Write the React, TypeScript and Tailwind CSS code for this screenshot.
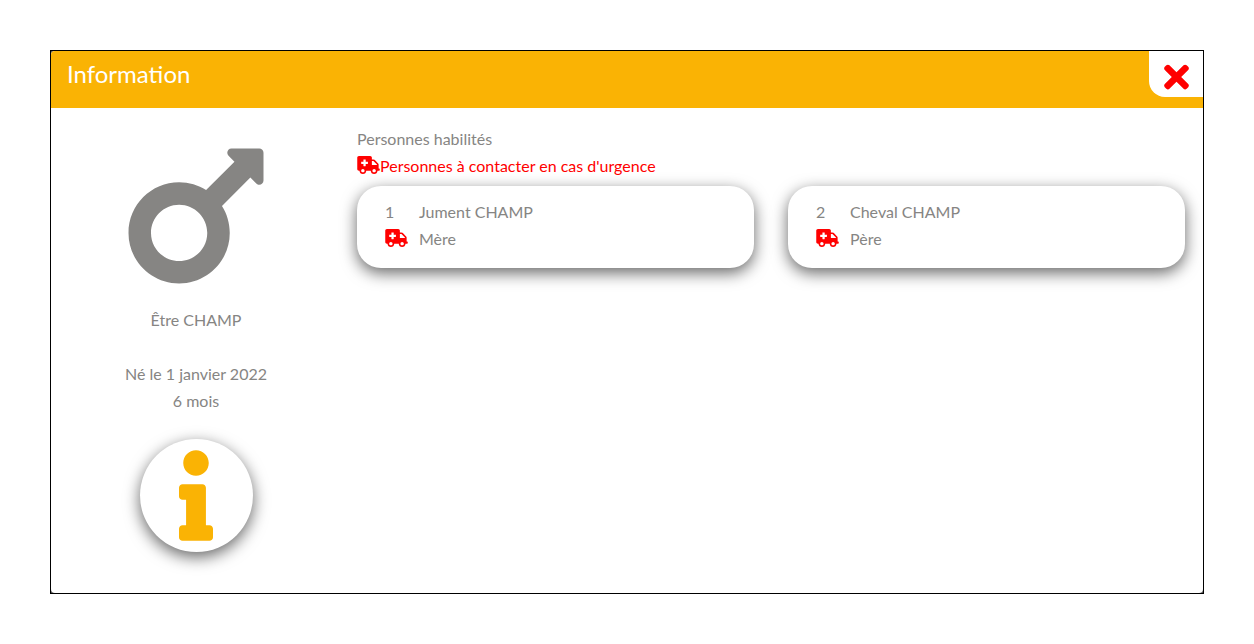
import { FaAmbulance, FaInfo, FaMars, FaTimes } from 'react-icons/fa';

type Contact = {
    order: number;
    name: string;
    relation: string;
};

const contacts: Contact[] = [
    { order: 1, name: 'Jument CHAMP', relation: 'Mère' },
    { order: 2, name: 'Cheval CHAMP', relation: 'Père' },
];

function ContactCard({ contact }: { contact: Contact }) {
    return (
        <li className="flex rounded-3xl bg-white px-7 pt-3 pb-4 shadow-[0_5px_16px_rgba(0,0,0,0.6)]">
            <div className="w-[34px] shrink-0">
                <p>{contact.order}</p>
                <FaAmbulance className="mt-1 h-[18px] w-[23px] text-[#ff0000]" />
            </div>
            <div>
                <p>{contact.name}</p>
                <p>{contact.relation}</p>
            </div>
        </li>
    );
}

export default function App() {
    return (
        <div className="flex min-h-screen bg-white p-[50px] font-['Lato',sans-serif] text-base leading-[27px] text-[#868583]">
            <div role="dialog" aria-labelledby="dialog-title" className="flex flex-1 border border-black bg-[#555]">
                <div className="flex-1 overflow-hidden rounded-b rounded-tl-sm bg-white">
                    <header className="flex h-[57px] items-start justify-between bg-[#fab304]">
                        <h1 id="dialog-title" className="pt-[7px] pl-4 text-2xl leading-8 text-white">
                            Information
                        </h1>
                        <button
                            type="button"
                            aria-label="Fermer"
                            className="flex h-[46px] w-[54px] items-center justify-center rounded-bl-2xl bg-white pt-1.5 text-[#ff0000]"
                        >
                            <FaTimes className="h-9 w-[25px]" />
                        </button>
                    </header>

                    <div className="flex pt-[17px] pb-10">
                        <aside className="flex w-1/4 shrink-0 flex-col items-center pl-0.5 text-center">
                            <FaMars className="mt-px h-[180px] w-[136px]" />
                            <p>Être CHAMP</p>
                            <p className="mt-[27px]">Né le 1 janvier 2022</p>
                            <p>6 mois</p>
                            <button
                                type="button"
                                aria-label="Informations"
                                className="mt-[25px] flex size-[113px] items-center justify-center rounded-full bg-white text-[#fab304] shadow-[0_5px_16px_rgba(0,0,0,0.6)]"
                            >
                                <FaInfo className="h-[91px] w-[34px]" />
                            </button>
                        </aside>

                        <main className="flex-1 px-[18px]">
                            <h2>Personnes habilités</h2>
                            <p className="flex text-[#ff0000]">
                                <FaAmbulance className="mt-1 h-[18px] w-[23px]" />
                                Personnes à contacter en cas d'urgence
                            </p>
                            <ul className="mt-[7px] grid grid-cols-2 gap-[34px]">
                                {contacts.map((contact) => (
                                    <ContactCard key={contact.order} contact={contact} />
                                ))}
                            </ul>
                        </main>
                    </div>
                </div>
            </div>
        </div>
    );
}
